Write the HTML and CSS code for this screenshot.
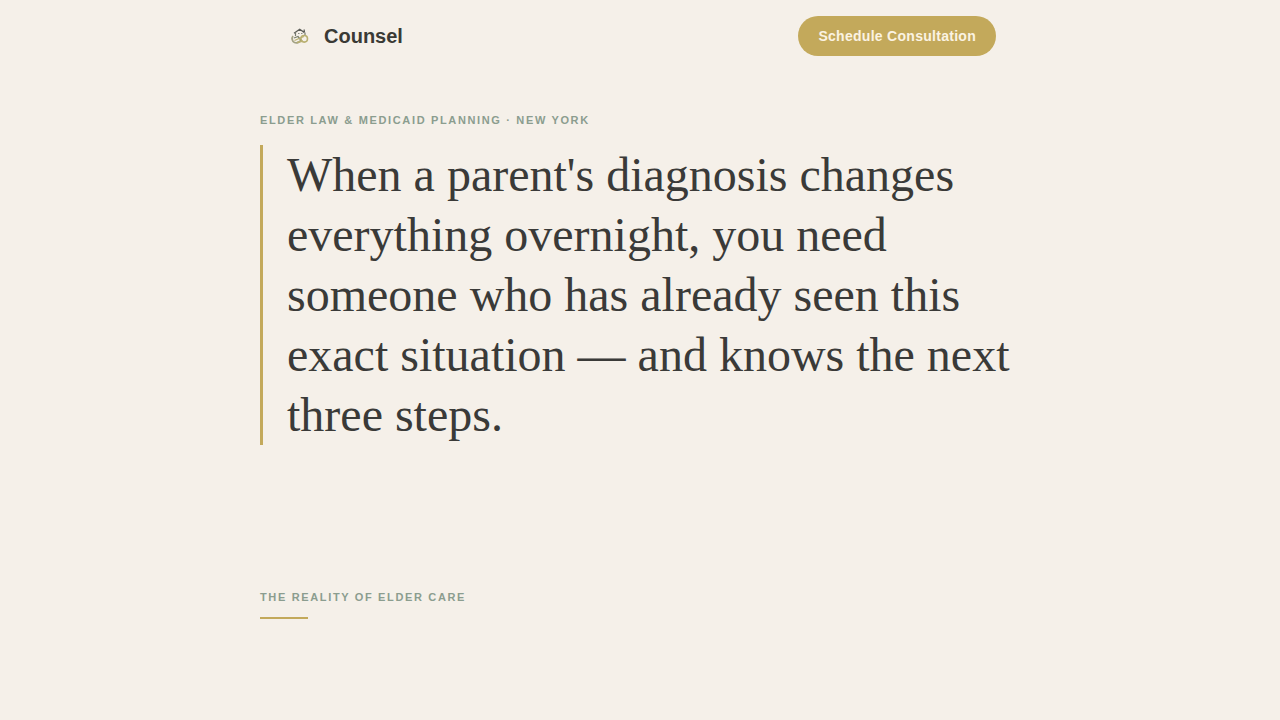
FILE: index.html
```html
<!DOCTYPE html>
<html lang="en">
<head>
  <meta charset="UTF-8">
  <meta name="viewport" content="width=device-width, initial-scale=1.0">
  <title>Counsel</title>
  <link rel="stylesheet" href="styles.css">
</head>
<body>
  <header class="header">
    <a class="logo" href="#">
      <svg class="logo-icon" viewBox="0 0 32 32" fill="none" aria-hidden="true">
        <!-- roof and walls -->
        <path d="M10 13.2L15.7 9.2L20.5 12.6M20.2 9.5V12" stroke="#5c5d58" stroke-width="1.3"/>
        <path d="M11.5 12.5V16M21 12.5V15.5" stroke="#777b70" stroke-width="1.2"/>
        <path d="M14 13.5H15.5M17 13.5H18.5" stroke="#8b8f84" stroke-width="1"/>
        <!-- joined hands -->
        <path d="M9 16C7.5 18 8 21.5 10.5 22.5C13 23.5 16 22 17.5 19.5" stroke="#a3a284" stroke-width="1.8"/>
        <path d="M10 18L14 16.5L18 21.5" stroke="#7b806f" stroke-width="1.3"/>
        <circle cx="20.2" cy="18.8" r="3.3" stroke="#b9b071" stroke-width="1.6"/>
        <path d="M10.5 20.5L15 18.5L20 16.5M13 22.5L19 21" stroke="#b9b071" stroke-width="1.3"/>
      </svg>
      <span>Counsel</span>
    </a>
    <button class="cta" type="button">Schedule Consultation</button>
  </header>

  <main class="container">
    <section class="hero">
      <p class="eyebrow">Elder Law &amp; Medicaid Planning · New York</p>
      <h1 class="headline">When a parent's diagnosis changes everything overnight, you need someone who has already seen this exact situation — and knows the next three steps.</h1>
    </section>

    <section class="reality">
      <h2 class="eyebrow">The Reality of Elder Care</h2>
      <hr class="rule">
    </section>
  </main>
</body>
</html>
```
FILE: styles.css
```css
* {
  box-sizing: border-box;
  margin: 0;
  padding: 0;
}

body {
  background-color: #f5f0e9;
  color: #3a3a38;
  font-family: "Liberation Sans", Arial, sans-serif;
}

.header {
  display: flex;
  align-items: center;
  justify-content: space-between;
  max-width: 760px;
  margin: 0 auto;
  padding: 16px 24px;
}

.logo {
  display: flex;
  align-items: center;
  gap: 8px;
  color: #3a3a35;
  font-size: 20px;
  font-weight: 700;
  text-decoration: none;
}

.logo-icon {
  width: 32px;
  height: 32px;
}

.cta {
  height: 40px;
  padding: 0 20px;
  border: none;
  border-radius: 20px;
  background-color: #c3a95b;
  color: #fbf3e2;
  font-family: inherit;
  font-size: 14px;
  font-weight: 700;
  letter-spacing: 0.02em;
  cursor: pointer;
}

.container {
  max-width: 760px;
  margin: 0 auto;
}

.hero {
  padding: 40px 0 72px;
}

.eyebrow {
  color: #8b9d8f;
  font-size: 11px;
  font-weight: 700;
  line-height: 16px;
  letter-spacing: 0.15em;
  text-transform: uppercase;
}

.headline {
  margin-top: 17px;
  padding-left: 24px;
  border-left: 3px solid #c3a95b;
  font-family: "Liberation Serif", "Times New Roman", serif;
  font-size: 48px;
  font-weight: 400;
  line-height: 60px;
}

.reality {
  padding: 72px 0;
}

.rule {
  width: 48px;
  height: 2px;
  margin-top: 12px;
  border: none;
  background-color: #c3a95b;
}
```
